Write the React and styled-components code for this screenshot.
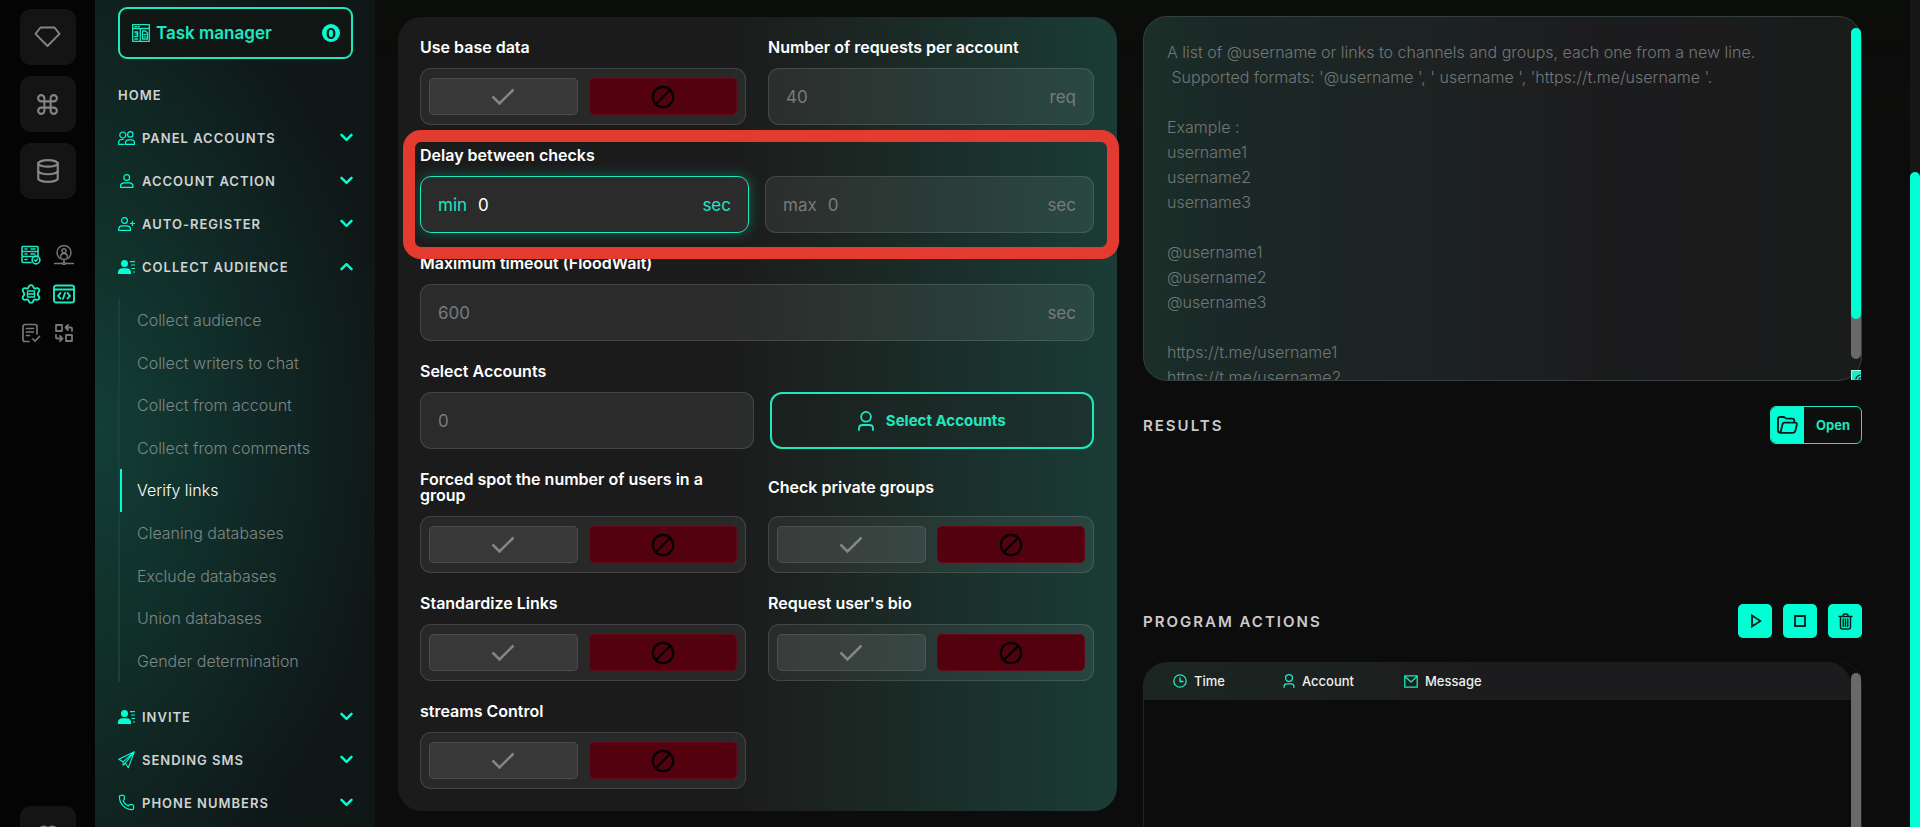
import React from "react";
import styled, { createGlobalStyle, css } from "styled-components";
import { Command, Database, Heart, Phone } from "lucide-react";

const MINT = "#00ffd5";
const TEAL = "#1ee8c0";

const GlobalStyle = createGlobalStyle`
  *, *::before, *::after { box-sizing: border-box; }
  body {
    margin: 0;
    background: #0d0c0d;
    color: #fff;
    font-family: Inter, "Liberation Sans", sans-serif;
    overflow: hidden;
  }
  button, input, textarea { font: inherit; color: inherit; }
  button { cursor: pointer; }
  ul { list-style: none; margin: 0; padding: 0; }
`;

/* ---------- shell ---------- */

const Shell = styled.div`
  display: flex;
  height: 100vh;
  overflow: hidden;
`;

const Rail = styled.nav`
  flex: 0 0 95px;
  display: flex;
  flex-direction: column;
  align-items: center;
  justify-content: space-between;
  height: calc(100vh + 35px);
  padding-top: 9px;
  background: #040404;
`;

const RailGroup = styled.div`
  display: flex;
  flex-direction: column;
  align-items: center;
  gap: 11px;
`;

const RailButton = styled.button`
  display: grid;
  place-items: center;
  width: 56px;
  height: 56px;
  padding: 0;
  border: 0;
  border-radius: 11px;
  background: #141414;
  color: #858585;
`;

const ToolGrid = styled.div`
  display: grid;
  grid-template-columns: 22px 22px;
  gap: 17px 11px;
  margin-top: 34px;
`;

const ToolButton = styled.button`
  display: grid;
  place-items: center;
  width: 22px;
  height: 22px;
  padding: 0;
  border: 0;
  background: none;
  color: ${(p) => (p.$on ? TEAL : "#777")};
`;

const Sidebar = styled.aside`
  flex: 0 0 280px;
  min-height: 100vh;
  padding: 7px 22px 0 23px;
  background:
    radial-gradient(ellipse 300px 460px at 0% 52%, rgba(18, 70, 60, 0.8), rgba(18, 70, 60, 0) 100%),
    linear-gradient(90deg, #101f1c, #0f1819 60%, #101716);
`;

const TaskButton = styled.button`
  display: flex;
  align-items: center;
  gap: 6px;
  width: 100%;
  height: 52px;
  padding: 0 11px 0 12px;
  border: 2px solid ${TEAL};
  border-radius: 9px;
  background: #0f1614;
  color: ${TEAL};
  font-size: 17px;
  font-weight: 600;
`;

const Badge = styled.span`
  display: grid;
  place-items: center;
  width: 18px;
  height: 18px;
  margin-left: auto;
  border-radius: 50%;
  background: ${MINT};
  color: #0f1614;
  font-size: 15px;
  font-weight: 700;
`;

const NavCaption = styled.div`
  padding: 27px 0 12px;
  color: #cfd3d2;
  font-size: 13px;
  font-weight: 600;
  line-height: 18px;
  letter-spacing: 1px;
`;

const NavHeading = styled.button`
  display: flex;
  align-items: center;
  gap: 7px;
  width: 100%;
  height: 43px;
  padding: 0;
  border: 0;
  background: none;
  color: #cfd3d2;
  font-size: 13px;
  font-weight: 600;
  letter-spacing: 1px;
  text-align: left;

  svg { color: ${MINT}; flex: none; }
  svg:last-child { margin-left: auto; }
`;

const SubList = styled.ul`
  display: grid;
  grid-auto-rows: 1fr;
  min-height: 383px;
  margin: 11px 0 13px;
  border-left: 2px solid #1a4139;
`;

const SubLink = styled.a`
  display: flex;
  align-items: center;
  height: 100%;
  padding-left: 15px;
  border-left: 2px solid transparent;
  color: #7d8785;
  font-size: 16px;
  font-weight: 300;
  text-decoration: none;
  ${(p) =>
    p.$active &&
    css`
      border-color: ${MINT};
      color: #fff;
    `}
`;

const Main = styled.main`
  flex: 1;
  min-width: 0;
  display: grid;
  grid-template-columns: minmax(0, 1fr) minmax(0, 1fr);
  align-items: start;
  gap: 26px;
  padding: 16px 48px 0 23px;
  background: linear-gradient(180deg, #0b0d0a, #0d0c0d 200px);
`;

const PageScroll = styled.div`
  flex: 0 0 10px;
  display: flex;
  align-items: flex-end;
  background: #171717;
`;

const PageThumb = styled.div`
  width: 100%;
  height: calc(100% - 172px);
  border-radius: 5px 5px 0 0;
  background: ${MINT};
`;

/* ---------- settings form ---------- */

const Card = styled.form`
  display: flex;
  flex-direction: column;
  gap: 22px;
  margin-top: 1px;
  padding: 22px 23px 22px 22px;
  border-radius: 24px;
  background: linear-gradient(90deg, #1b1b1b 45%, #1b2925 68%, #1a332e 84%, #1b3c36);
`;

const Columns = styled.div`
  display: grid;
  grid-template-columns: minmax(0, 1fr) minmax(0, 1fr);
  gap: 22px;
`;

const Field = styled.div`
  position: relative;
  display: flex;
  flex-direction: column;
  gap: 13px;
`;

const Title = styled.label`
  flex: 1;
  display: flex;
  align-items: center;
  font-size: 16px;
  font-weight: 600;
  line-height: 16px;
`;

const Pair = styled.div`
  display: grid;
  grid-template-columns: ${(p) => p.$columns || "minmax(0, 1fr) minmax(0, 1fr)"};
  gap: 16px;
`;

const InputBox = styled.div`
  display: flex;
  align-items: center;
  gap: 11px;
  height: 57px;
  padding: 0 17px;
  border: 1px solid rgba(255, 255, 255, 0.12);
  border-radius: 11px;
  background: rgba(255, 255, 255, 0.07);
  color: #777c7a;
  font-size: 17px;
  ${(p) =>
    p.$focused &&
    css`
      border-color: ${TEAL};
      color: ${TEAL};
      box-shadow: 0 0 14px rgba(0, 255, 213, 0.3);
    `}
`;

const TextInput = styled.input`
  flex: 1;
  min-width: 0;
  padding: 0;
  border: 0;
  outline: 0;
  background: none;
  color: ${(p) => (p.$focused ? "#fff" : "#777c7a")};

  &::placeholder { color: #777c7a; opacity: 1; }
`;

const SelectButton = styled.button`
  display: flex;
  align-items: center;
  justify-content: center;
  gap: 12px;
  height: 57px;
  border: 2px solid ${TEAL};
  border-radius: 12px;
  background: linear-gradient(90deg, #1a201e, #1c332e);
  color: ${TEAL};
  font-size: 15px;
  font-weight: 700;
`;

const Switch = styled.div`
  display: grid;
  grid-template-columns: 1fr 1fr;
  gap: 11px;
  height: 57px;
  padding: 9px 8px;
  border: 1px solid rgba(255, 255, 255, 0.12);
  border-radius: 11px;
  background: rgba(255, 255, 255, 0.06);
`;

const Choice = styled.label`
  display: grid;
  place-items: center;
  border: 1px solid ${(p) => (p.$off ? "#620818" : "rgba(255, 255, 255, 0.1)")};
  border-radius: 5px;
  background: ${(p) => (p.$off ? "#53000f" : "rgba(255, 255, 255, 0.08)")};
  color: ${(p) => (p.$off ? "#000" : "#858585")};
  cursor: pointer;
`;

const HiddenRadio = styled.input`
  position: absolute;
  opacity: 0;
  pointer-events: none;
`;

const Highlight = styled.div`
  position: absolute;
  z-index: 2;
  inset: -17px -25px -26px -17px;
  border: 12px solid #e43b30;
  border-radius: 18px;
  pointer-events: none;
`;

/* ---------- right column ---------- */

const Panel = styled.section`
  display: flex;
  flex-direction: column;
  min-width: 0;
`;

const ListBox = styled.div`
  position: relative;
  display: flex;
  height: 365px;
  border: 1px solid #34403d;
  border-radius: 24px;
  background: linear-gradient(90deg, #1b2f28, #1a2827 12%, #1d2323 38%, #1c1c1e 62%, #1a1b1b);
`;

const ListInput = styled.textarea`
  flex: 1;
  height: 100%;
  padding: 23px 32px 0 23px;
  border: 0;
  outline: 0;
  resize: none;
  overflow: hidden;
  background: none;
  font-size: 16px;
  font-weight: 300;
  line-height: 25px;

  &::placeholder { color: #717776; opacity: 1; }
`;

const ListTrack = styled.div`
  position: absolute;
  top: 11px;
  right: 0;
  bottom: 21px;
  width: 10px;
  border-radius: 5px;
  background: #69686b;
`;

const ListThumb = styled.div`
  height: 88%;
  border-radius: 5px;
  background: ${MINT};
`;

const Resizer = styled.div`
  position: absolute;
  right: 0;
  bottom: 0;
  display: grid;
  place-items: end;
  width: 10px;
  height: 10px;
  background: #25e5c3;
  border: 1px solid #9ffff0;
  border-width: 1px 0 0 1px;
`;

const SectionBar = styled.header`
  display: flex;
  align-items: center;
  justify-content: space-between;
`;

const ResultsBar = styled(SectionBar)`
  margin: 25px 0 160px;
`;

const SectionTitle = styled.h2`
  margin: 0;
  color: #cbcacb;
  font-size: 15px;
  font-weight: 600;
  letter-spacing: 2px;
`;

const OpenButton = styled.button`
  display: flex;
  align-items: stretch;
  height: 38px;
  padding: 0;
  border: 1px solid ${TEAL};
  border-radius: 6px;
  overflow: hidden;
  background: #0d0f0d;
  color: ${TEAL};
  font-size: 13px;
  font-weight: 700;
`;

const OpenIcon = styled.span`
  display: grid;
  place-items: center;
  width: 33px;
  background: ${MINT};
  color: #0b1a17;
`;

const OpenText = styled.span`
  align-self: center;
  padding: 0 11px 0 12px;
`;

const Actions = styled.div`
  display: flex;
  gap: 11px;
`;

const ActionButton = styled.button`
  display: grid;
  place-items: center;
  width: 34px;
  height: 34px;
  padding: 0;
  border: 0;
  border-radius: 5px;
  background: ${MINT};
  color: #06201b;
`;

const LogBox = styled.div`
  display: flex;
  min-height: 240px;
  margin-top: 24px;
  border: 1px solid #232324;
  border-width: 0 1px;
  border-radius: 24px;
`;

const LogMain = styled.div`
  flex: 1;
`;

const LogTable = styled.table`
  width: 100%;
  border-collapse: separate;
  border-spacing: 0;
  border-radius: 24px 24px 0 0;
  overflow: hidden;
  background: linear-gradient(90deg, #1b2622, #1c201f 32%, #1c1b1d 50%);
`;

const LogHead = styled.th`
  width: ${(p) => p.$width};
  height: 38px;
  padding: 0 0 0 ${(p) => (p.$first ? "29px" : "0")};
  color: #ecf0ef;
  font-size: 13px;
  font-weight: 500;
  text-align: left;
`;

const HeadCell = styled.span`
  display: flex;
  align-items: center;
  gap: 7px;
  svg { color: ${TEAL}; }
`;

const LogTrack = styled.div`
  width: 10px;
  margin-top: 11px;
  border-radius: 5px;
  background: #69686b;
`;

/* ---------- icons ---------- */

function Icon({ w = 20, h = w, box = "0 0 20 20", stroke = 1.6, children }) {
  return (
    <svg width={w} height={h} viewBox={box} fill="none" stroke="currentColor" strokeWidth={stroke}
      strokeLinecap="round" strokeLinejoin="round" aria-hidden="true">
      {children}
    </svg>
  );
}

const DiamondIcon = () => (
  <Icon w={27} h={22} box="0 0 27 22" stroke={1.9}>
    <path d="M6.5 1.5h14l5 6.3L13.5 20 1.5 7.8z" />
  </Icon>
);
const ServerCheckIcon = () => (
  <Icon w={20} stroke={1.6}>
    <rect x="1" y="1.5" width="16" height="5" rx="1" />
    <path d="M17 6.500v5H2a1 1 0 0 1-1-1v-4M1 12v4.500a1 1 0 0 0 1 1h8M4 4h2M4 9h2M4 14.500h2M10 4h4M10 9h4" />
    <circle cx="15" cy="15" r="3.900" />
    <path d="m13.300 15 1.300 1.200 2-2.200" />
  </Icon>
);
const ProxyIcon = () => (
  <Icon w={20} stroke={1.4}>
    <circle cx="10" cy="7.500" r="7" />
    <circle cx="10" cy="5.700" r="2" />
    <path d="M6.800 12.500V11c0-1.700 1.200-2.500 3.200-2.500s3.200.8 3.200 2.500v1.500M10 14.500v3M.5 18.500h8M11.500 18.500h8" />
    <circle cx="10" cy="18.500" r="1.200" />
  </Icon>
);
const GearIcon = () => (
  <Icon w={20} stroke={1.9}>
    <path d="M7.800 2.800c.6-2.200 3.800-2.200 4.400 0 .4 1.500 1.600 2 3 1.500 2.300-.8 4 1.700 2.500 3.500-1.100 1.300-1.100 3.100 0 4.400 1.500 1.800-.2 4.300-2.500 3.500-1.400-.5-2.600 0-3 1.500-.6 2.200-3.800 2.200-4.400 0-.4-1.500-1.600-2-3-1.500-2.300.8-4-1.700-2.500-3.500 1.100-1.300 1.100-3.100 0-4.400C.8 6 2.500 3.500 4.800 4.300c1.400.5 2.600 0 3-1.500z" />
    <rect x="6.500" y="7" width="7" height="6" strokeWidth="1.400" />
    <path d="M6.500 10h7" strokeWidth="1.600" />
  </Icon>
);
const CodeIcon = () => (
  <Icon w={22} h={20} box="0 0 22 20" stroke={1.9}>
    <rect x="1" y="1.500" width="20" height="17" rx="2" />
    <path d="M1 5.500h20M7.500 9l-2.500 2.800 2.500 2.800M14.500 9l2.500 2.800-2.500 2.800M12 9l-2 5.800" />
  </Icon>
);
const DocCheckIcon = () => (
  <Icon w={20} stroke={1.7}>
    <path d="M8 18.500H4a2 2 0 0 1-2-2v-13a2 2 0 0 1 2-2h10a2 2 0 0 1 2 2V11M5.500 5.500h7M5.500 9h7M5.500 12.500h3M12 16l2 2.200 4.500-4.700" />
  </Icon>
);
const SwapIcon = () => (
  <Icon w={20} stroke={1.8}>
    <rect x="2" y="2" width="6" height="6" />
    <rect x="12" y="12" width="6" height="6" />
    <path d="M18 8V5.500a1 1 0 0 0-1-1h-5M14 2l-2.500 2.500L14 7M2 12v2.500a1 1 0 0 0 1 1h5M6 13l2.500 2.500L6 18" />
  </Icon>
);
const TaskIcon = () => (
  <Icon w={18} stroke={1.3} box="0 0 18 18">
    <rect x="0.700" y="0.700" width="16.600" height="16.600" />
    <path d="M.7 4.500h16.600M3 2.600h1.500M6 2.600h1.500M8.300 4.500v12.800M10.500 7h3l2 2v6h-5zM12 10.500h2M12 12.800h2M2.700 8h3v2h-2M5.700 10v2.500h-3M2.700 15h3" />
  </Icon>
);
const PeopleIcon = () => (
  <Icon w={17} h={14} box="0 0 17 14" stroke={1.2}>
    <circle cx="4.800" cy="4" r="3" />
    <circle cx="12.300" cy="3.400" r="2.700" />
    <path d="M6 13.300H.7v-2c0-1.800 1.300-2.800 3-2.800h1.600M7.500 13.300h9v-1.500c0-2-1.300-3-3-3h-3c-1.700 0-3 1-3 3z" />
  </Icon>
);
const PersonIcon = () => (
  <Icon w={17} h={14} box="0 0 17 14" stroke={1.2}>
    <circle cx="8.700" cy="3.500" r="2.900" />
    <path d="M2.500 13.300h12.500v-1c0-2.300-1.700-3.500-4-3.500H6.500c-2.300 0-4 1.200-4 3.500z" />
  </Icon>
);
const PersonAddIcon = () => (
  <Icon w={17} h={14} box="0 0 17 14" stroke={1.2}>
    <circle cx="6.500" cy="3.500" r="2.900" />
    <path d="M.7 13.300H12.500v-1c0-2.300-1.700-3.500-4-3.500h-4c-2.300 0-3.800 1.200-3.800 3.500zM12.300 6.500h4.200M14.400 4.400v4.200" />
  </Icon>
);
const AudienceIcon = () => (
  <Icon w={17} h={14} box="0 0 17 14" stroke={1.2}>
    <circle cx="6.500" cy="3.600" r="3.500" fill="currentColor" stroke="none" />
    <path d="M0 14v-2c0-2.500 2-3.800 4.500-3.800h4c2.500 0 4.500 1.300 4.500 3.800v2z" fill="currentColor" stroke="none" />
    <path d="M12.500 1.700h4M13.500 5h3M14 8.500h2.500M15.500 12h1" />
  </Icon>
);
const PlaneIcon = () => (
  <Icon w={17} h={18} box="0 0 17 18" stroke={1.1}>
    <path d="M16.300.8.8 8.300l4.300 2.500zM16.300.8l-6 16-3-4.800zM16.300.8 5.100 10.800v3.500l2.200-2.300" />
  </Icon>
);
const ChevronIcon = ({ up }) => (
  <Icon w={13} h={9} box="0 0 13 9" stroke={2.4}>
    <path d={up ? "M1.500 7.200l5-5 5 5" : "M1.500 1.800l5 5 5-5"} />
  </Icon>
);
const UserIcon = ({ w = 16, h = 20, stroke = 1.8 }) => (
  <Icon w={w} h={h} box="0 0 16 20" stroke={stroke}>
    <circle cx="8" cy="5.800" r="4.900" />
    <path d="M1 19v-1.500c0-2.300 1.500-3.500 3.500-3.500h7c2 0 3.500 1.200 3.500 3.500V19" />
  </Icon>
);
const CheckIcon = () => (
  <Icon w={24} h={18} box="0 0 24 18" stroke={2.5}>
    <path d="m1.500 8.500 7 7L22.500 1.500" strokeLinecap="butt" strokeLinejoin="miter" />
  </Icon>
);
const BanIcon = () => (
  <Icon w={24} box="0 0 24 24" stroke={2.2}>
    <circle cx="12" cy="12" r="10.200" />
    <path d="M5 19 19 5" />
  </Icon>
);
const FolderIcon = () => (
  <Icon w={21} h={18} box="0 0 21 18" stroke={1.8}>
    <path d="M3.500 16.800c-1.700 0-2.500-1-2.500-2.500V3c0-1.300.8-2 2-2h3.500c1.500 0 2 1.700 3.500 1.700h5c1.500 0 2.300.8 2.300 2.300M3.500 16.800h12.500c1.300 0 2-.6 2.300-1.800l1.500-6.300c.3-1.300-.3-2-1.500-2H7.500c-1.200 0-1.700.5-2 1.500z" />
  </Icon>
);
const PlayIcon = () => (
  <Icon w={14} h={14} box="0 0 14 14" stroke={1.8}>
    <path d="M4 1.500v11l8.500-5.500z" strokeLinejoin="miter" />
  </Icon>
);
const StopIcon = () => (
  <Icon w={12} box="0 0 12 12" stroke={1.8}>
    <rect x="1" y="1" width="10" height="10" />
  </Icon>
);
const TrashIcon = () => (
  <Icon w={15} h={17} box="0 0 15 17" stroke={1.5}>
    <path d="M1 3.500h13M5 3.500v-1C5 1.500 5.500 1 6.500 1h2c1 0 1.500.5 1.500 1.500v1M2.500 3.500V14c0 1.300.7 2 2 2h6c1.300 0 2-.7 2-2V3.500M5.300 6v7.500M7.500 6v7.500M9.700 6v7.500" />
  </Icon>
);
const ClockIcon = () => (
  <Icon w={14} box="0 0 14 14" stroke={1.3}>
    <circle cx="7" cy="7" r="6.200" />
    <path d="M7 3.800V7.500h3" />
  </Icon>
);
const MailIcon = () => (
  <Icon w={14} h={13} box="0 0 14 13" stroke={1.3}>
    <rect x="0.800" y="0.800" width="12.400" height="11.400" />
    <path d="m1 1.500 6 5.500 6-5.500" />
  </Icon>
);

/* ---------- composed parts ---------- */

function Nav({ icon, children, open }) {
  return (
    <NavHeading type="button" aria-expanded={!!open}>
      {icon}
      {children}
      <ChevronIcon up={open} />
    </NavHeading>
  );
}

function Toggle({ id, title }) {
  return (
    <Field role="radiogroup" aria-labelledby={id}>
      <Title as="div" id={id}>{title}</Title>
      <Switch>
        <Choice aria-label="Yes">
          <HiddenRadio type="radio" name={id} value="yes" />
          <CheckIcon />
        </Choice>
        <Choice $off aria-label="No">
          <HiddenRadio type="radio" name={id} value="no" defaultChecked />
          <BanIcon />
        </Choice>
      </Switch>
    </Field>
  );
}

const SUB_ITEMS = [
  "Collect audience",
  "Collect writers to chat",
  "Collect from account",
  "Collect from comments",
  "Verify links",
  "Cleaning databases",
  "Exclude databases",
  "Union databases",
  "Gender determination",
];

const LIST_HINT = `A list of @username or links to channels and groups, each one from a new line.
 Supported formats: '@username ', ' username ', 'https://t.me/username '.

Example :
username1
username2
username3

@username1
@username2
@username3

https://t.me/username1
https://t.me/username2
https://t.me/username3`;

export default function App() {
  return (
    <Shell>
      <GlobalStyle />
      <Rail aria-label="Sections">
        <RailGroup>
          <RailButton aria-label="Premium"><DiamondIcon /></RailButton>
          <RailButton aria-label="Commands"><Command size={25} strokeWidth={2} /></RailButton>
          <RailButton aria-label="Databases"><Database size={26} strokeWidth={2} /></RailButton>
          <ToolGrid>
            <ToolButton $on aria-label="Servers"><ServerCheckIcon /></ToolButton>
            <ToolButton aria-label="Proxy"><ProxyIcon /></ToolButton>
            <ToolButton $on aria-label="Settings"><GearIcon /></ToolButton>
            <ToolButton $on aria-label="Code"><CodeIcon /></ToolButton>
            <ToolButton aria-label="Reports"><DocCheckIcon /></ToolButton>
            <ToolButton aria-label="Convert"><SwapIcon /></ToolButton>
          </ToolGrid>
        </RailGroup>
        <RailButton aria-label="Favourites"><Heart size={22} strokeWidth={2.5} /></RailButton>
      </Rail>

      <Sidebar>
        <TaskButton type="button">
          <TaskIcon />
          Task manager
          <Badge>0</Badge>
        </TaskButton>
        <NavCaption>HOME</NavCaption>
        <Nav icon={<PeopleIcon />}>PANEL ACCOUNTS</Nav>
        <Nav icon={<PersonIcon />}>ACCOUNT ACTION</Nav>
        <Nav icon={<PersonAddIcon />}>AUTO-REGISTER</Nav>
        <Nav icon={<AudienceIcon />} open>COLLECT AUDIENCE</Nav>
        <SubList>
          {SUB_ITEMS.map((item) => (
            <li key={item}>
              <SubLink href="#" $active={item === "Verify links"}>{item}</SubLink>
            </li>
          ))}
        </SubList>
        <Nav icon={<AudienceIcon />}>INVITE</Nav>
        <Nav icon={<PlaneIcon />}>SENDING SMS</Nav>
        <Nav icon={<Phone size={17} strokeWidth={1.7} />}>PHONE NUMBERS</Nav>
      </Sidebar>

      <Main>
        <Card>
          <Columns>
            <Toggle id="base-data" title="Use base data" />
            <Field>
              <Title htmlFor="requests">Number of requests per account</Title>
              <InputBox>
                <TextInput id="requests" placeholder="40" />
                req
              </InputBox>
            </Field>
          </Columns>

          <Field>
            <Title htmlFor="delay-min">Delay between checks</Title>
            <Pair>
              <InputBox $focused>
                min
                <TextInput $focused id="delay-min" defaultValue="0" />
                sec
              </InputBox>
              <InputBox>
                <label htmlFor="delay-max">max</label>
                <TextInput id="delay-max" placeholder="0" />
                sec
              </InputBox>
            </Pair>
            <Highlight />
          </Field>

          <Field>
            <Title htmlFor="timeout">Maximum timeout (FloodWait)</Title>
            <InputBox>
              <TextInput id="timeout" placeholder="600" />
              sec
            </InputBox>
          </Field>

          <Field>
            <Title htmlFor="accounts">Select Accounts</Title>
            <Pair $columns="333fr 324fr">
              <InputBox>
                <TextInput id="accounts" placeholder="0" />
              </InputBox>
              <SelectButton type="button">
                <UserIcon />
                Select Accounts
              </SelectButton>
            </Pair>
          </Field>

          <Columns>
            <Toggle id="forced-spot" title="Forced spot the number of users in a group" />
            <Toggle id="private-groups" title="Check private groups" />
            <Toggle id="standardize" title="Standardize Links" />
            <Toggle id="bio" title="Request user's bio" />
            <Toggle id="streams" title="streams Control" />
          </Columns>
        </Card>

        <Panel>
          <ListBox>
            <ListInput aria-label="Links to verify" placeholder={LIST_HINT} />
            <ListTrack><ListThumb /></ListTrack>
            <Resizer>
              <Icon w={6} box="0 0 6 6" stroke={1.2}><path d="M1 5c0-2 1-3 4-4M4 5l1-1" stroke="#0b1a17" /></Icon>
            </Resizer>
          </ListBox>

          <ResultsBar>
            <SectionTitle>RESULTS</SectionTitle>
            <OpenButton type="button">
              <OpenIcon><FolderIcon /></OpenIcon>
              <OpenText>Open</OpenText>
            </OpenButton>
          </ResultsBar>

          <SectionBar>
            <SectionTitle>PROGRAM ACTIONS</SectionTitle>
            <Actions>
              <ActionButton aria-label="Start"><PlayIcon /></ActionButton>
              <ActionButton aria-label="Stop"><StopIcon /></ActionButton>
              <ActionButton aria-label="Clear"><TrashIcon /></ActionButton>
            </Actions>
          </SectionBar>

          <LogBox>
            <LogMain>
              <LogTable>
                <thead>
                  <tr>
                    <LogHead scope="col" $first $width="139px"><HeadCell><ClockIcon />Time</HeadCell></LogHead>
                    <LogHead scope="col" $width="121px"><HeadCell><UserIcon w={12} h={14} stroke={1.9} />Account</HeadCell></LogHead>
                    <LogHead scope="col"><HeadCell><MailIcon />Message</HeadCell></LogHead>
                  </tr>
                </thead>
              </LogTable>
            </LogMain>
            <LogTrack />
          </LogBox>
        </Panel>
      </Main>

      <PageScroll>
        <PageThumb />
      </PageScroll>
    </Shell>
  );
}
